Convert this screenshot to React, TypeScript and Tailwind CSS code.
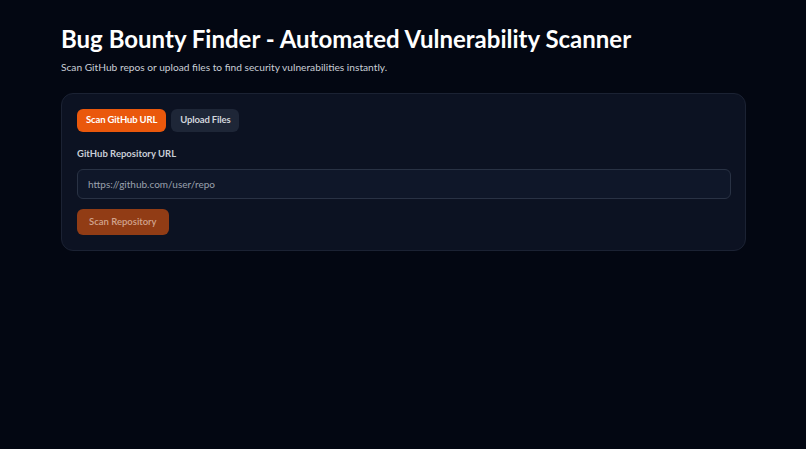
import { useState } from "react";

export default function App() {
  const [mode, setMode] = useState<"url" | "upload">("url");
  const [url, setUrl] = useState("");

  const tab = (active: boolean) =>
    active
      ? "h-[23px] rounded-md bg-[#ea580c] px-[9px] text-[9.5px] font-bold tracking-[-0.15px] text-white"
      : "h-[23px] rounded-md bg-[#1e2637] px-[9px] text-[9.5px] font-bold tracking-[-0.15px] text-[#d1d5db]";

  return (
    <div
      className="min-h-screen bg-[#030712] text-white"
      style={{ fontFamily: 'Lato, "Noto Sans", sans-serif' }}
    >
      <div className="px-[61px] pt-[24px]">
        <h1 className="text-[24px] font-bold leading-[30px]">
          Bug Bounty Finder - Automated Vulnerability Scanner
        </h1>
        <p className="mt-[5px] text-[10.2px] leading-[16px] text-[#c9ced6]">
          Scan GitHub repos or upload files to find security vulnerabilities instantly.
        </p>

        <div className="mt-[18px] w-[685px] rounded-xl border border-[#1b2233] bg-[#0c1222] px-[15px] pt-[15px] pb-[15px]">
          <div className="flex gap-[5px]">
            <button onClick={() => setMode("url")} className={tab(mode === "url")}>
              Scan GitHub URL
            </button>
            <button onClick={() => setMode("upload")} className={tab(mode === "upload")}>
              Upload Files
            </button>
          </div>

          <label className="mt-[15px] block text-[9.5px] font-bold leading-[14px] text-[#c9ced6]">
            GitHub Repository URL
          </label>
          <input
            value={url}
            onChange={(e) => setUrl(e.target.value)}
            placeholder="https://github.com/user/repo"
            className="mt-[8px] block h-[30px] w-[654px] rounded-md border border-[#293244] bg-[#0f1729] px-[10px] text-[10px] text-white placeholder:text-[#9aa1ad] outline-none"
          />

          <button
            disabled={!url}
            className="mt-[10px] h-[26px] rounded-md bg-[#913c15] px-[12px] text-[9.5px] font-semibold text-[#d2a48e]"
          >
            Scan Repository
          </button>
        </div>
      </div>
    </div>
  );
}
